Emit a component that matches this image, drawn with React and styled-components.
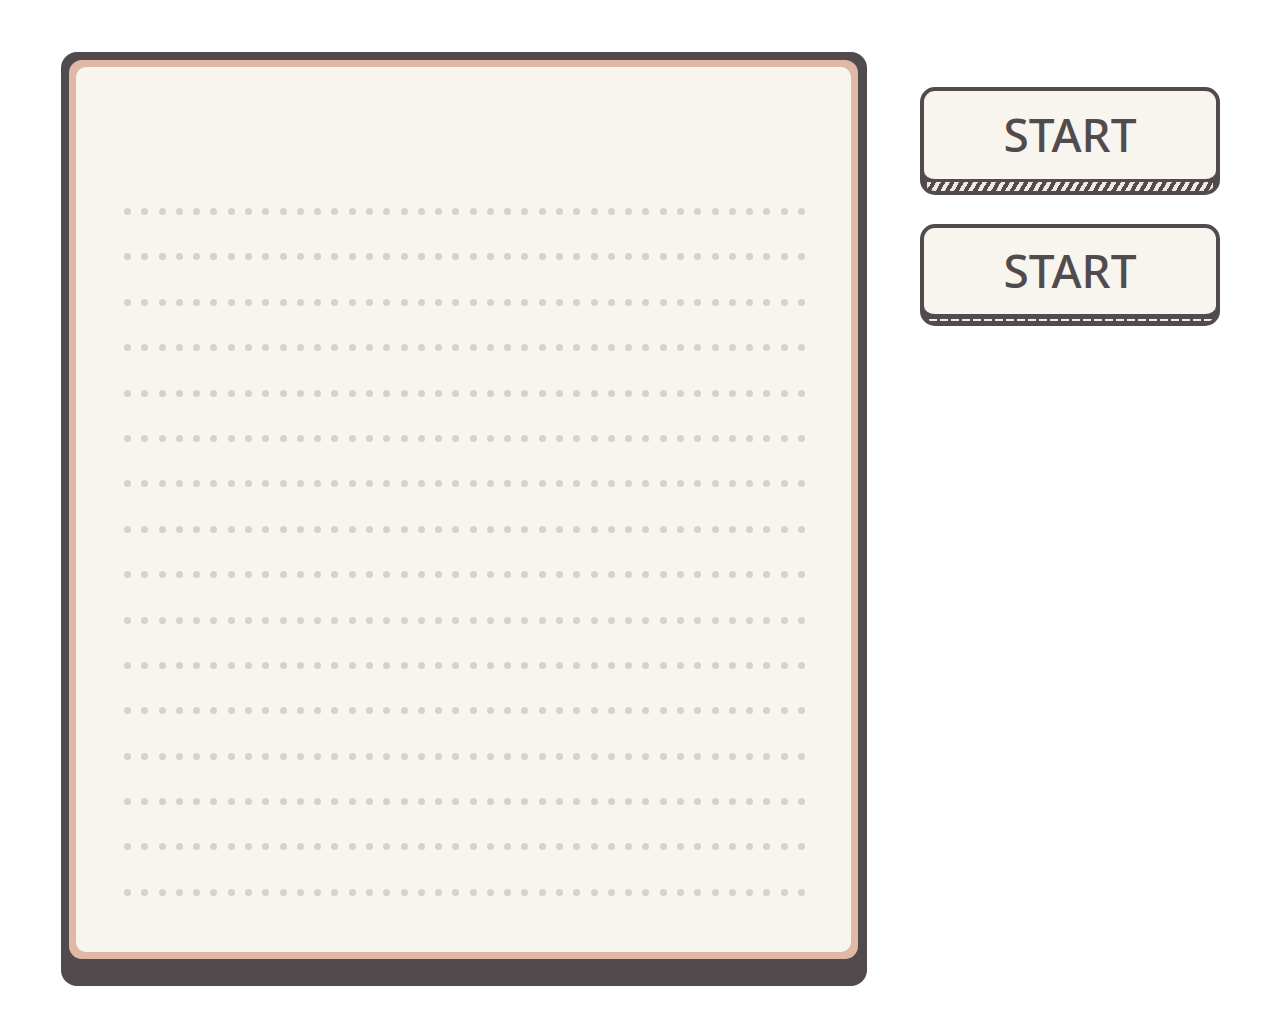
import React from "react";
import styled, { createGlobalStyle } from "styled-components";

const INK = "#524b4e";
const CREAM = "#f8f4ee";
const ROWS = 16;
const COLS = 40;

const GlobalStyle = createGlobalStyle`
  html, body {
    margin: 0;
    padding: 0;
    background: #ffffff;
  }
  body {
    font-family: "Noto Sans", "DejaVu Sans", sans-serif;
  }
`;

const Page = styled.div`
  display: flex;
  align-items: flex-start;
  gap: 53px;
  padding: 52px 0 0 61px;
`;

const Panel = styled.div`
  width: 806px;
  box-sizing: border-box;
  padding: 8px 9px 27px 8px;
  background: ${INK};
  border-radius: 16px;
`;

const Frame = styled.div`
  padding: 7px;
  background: #e0b8a6;
  border-radius: 13px;
`;

const Paper = styled.div`
  height: 885px;
  box-sizing: border-box;
  padding: 141px 0 0 48px;
  background: ${CREAM};
  border-radius: 10px;
`;

const DotGrid = styled.div`
  width: 681px;
  height: 688px;
  display: flex;
  flex-direction: column;
  justify-content: space-between;
`;

const DotRow = styled.div`
  display: flex;
  justify-content: space-between;
`;

const Dot = styled.span`
  width: 7px;
  height: 7px;
  border-radius: 50%;
  background: #d6d1cc;
`;

const Controls = styled.div`
  display: flex;
  flex-direction: column;
  gap: 29px;
  padding-top: 35px;
`;

const Shell = styled.button`
  width: 300px;
  padding: 0;
  display: flex;
  flex-direction: column;
  border: 4px solid ${INK};
  border-radius: 15px;
  background: ${INK};
  overflow: hidden;
  cursor: pointer;
  font: inherit;
`;

const Face = styled.span`
  height: ${(p) => (p.$pressed ? 83 : 85)}px;
  display: flex;
  align-items: center;
  justify-content: center;
  padding-bottom: 3px;
  box-sizing: content-box;
  background: ${CREAM};
  border-bottom: 3px solid ${INK};
  border-radius: 0 0 11px 11px;
  color: ${INK};
  font-family: "Noto Sans", "DejaVu Sans", sans-serif;
  font-size: 46px;
  font-weight: 500;
  line-height: 1;
`;

const Band = styled.span`
  display: block;
  height: ${(p) => (p.$pressed ? 5 : 9)}px;
  margin: 0 3px;
  background-color: ${INK};
  background-image: ${(p) =>
    p.$pressed
      ? `linear-gradient(90deg, #efe9e2 0 8px, transparent 8px)`
      : `repeating-linear-gradient(120deg, #efe9e2 0 4px, ${INK} 4px 8px)`};
  background-size: ${(p) => (p.$pressed ? "11px 2px" : "auto")};
  background-repeat: ${(p) => (p.$pressed ? "repeat-x" : "repeat")};
  background-position: ${(p) => (p.$pressed ? "2px 2px" : "0 0")};
`;

const StartButton = ({ pressed }) => (
  <Shell>
    <Face $pressed={pressed}>START</Face>
    <Band $pressed={pressed} />
  </Shell>
);

export default function App() {
  return (
    <>
      <GlobalStyle />
      <Page>
        <Panel>
          <Frame>
            <Paper>
              <DotGrid>
                {Array.from({ length: ROWS }, (_, r) => (
                  <DotRow key={`row-${r}`}>
                    {Array.from({ length: COLS }, (_, c) => (
                      <Dot key={`dot-${r}-${c}`} />
                    ))}
                  </DotRow>
                ))}
              </DotGrid>
            </Paper>
          </Frame>
        </Panel>
        <Controls>
          <StartButton />
          <StartButton pressed />
        </Controls>
      </Page>
    </>
  );
}
